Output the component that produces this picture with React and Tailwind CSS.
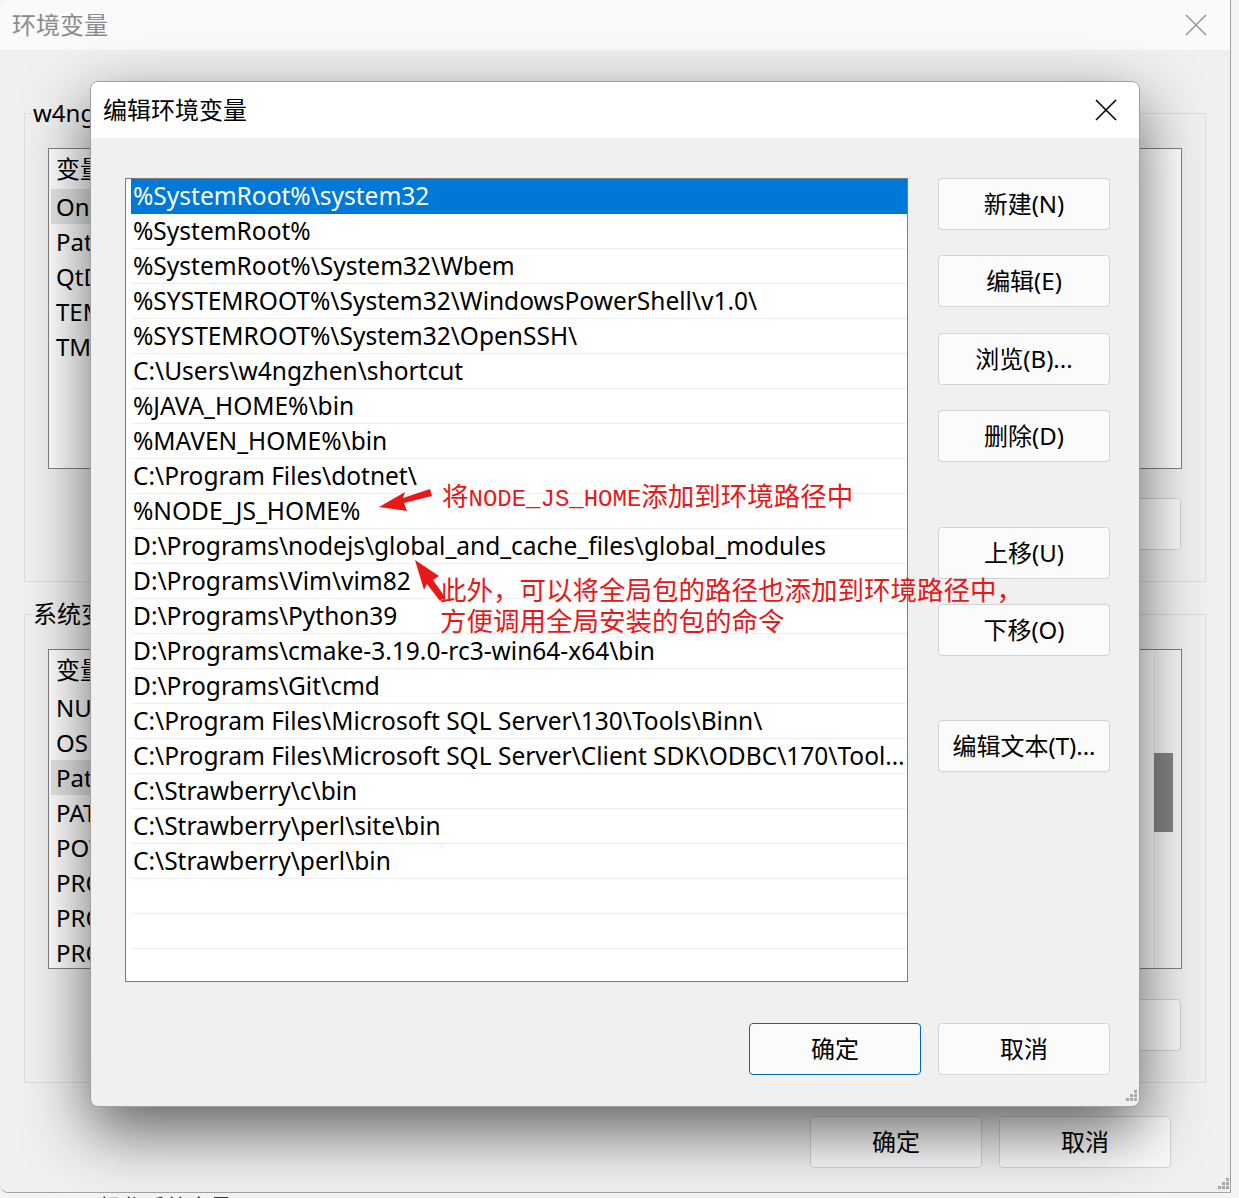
import React from "react";

const paths = [
  "%SystemRoot%\\system32",
  "%SystemRoot%",
  "%SystemRoot%\\System32\\Wbem",
  "%SYSTEMROOT%\\System32\\WindowsPowerShell\\v1.0\\",
  "%SYSTEMROOT%\\System32\\OpenSSH\\",
  "C:\\Users\\w4ngzhen\\shortcut",
  "%JAVA_HOME%\\bin",
  "%MAVEN_HOME%\\bin",
  "C:\\Program Files\\dotnet\\",
  "%NODE_JS_HOME%",
  "D:\\Programs\\nodejs\\global_and_cache_files\\global_modules",
  "D:\\Programs\\Vim\\vim82",
  "D:\\Programs\\Python39",
  "D:\\Programs\\cmake-3.19.0-rc3-win64-x64\\bin",
  "D:\\Programs\\Git\\cmd",
  "C:\\Program Files\\Microsoft SQL Server\\130\\Tools\\Binn\\",
  "C:\\Program Files\\Microsoft SQL Server\\Client SDK\\ODBC\\170\\Tools\\Binn\\",
  "C:\\Strawberry\\c\\bin",
  "C:\\Strawberry\\perl\\site\\bin",
  "C:\\Strawberry\\perl\\bin",
  "",
  "",
  "",
];

const userVars = [
  ["OneDrive", "C:\\Users\\w4ngzhen\\OneDrive"],
  ["Path", "C:\\Users\\w4ngzhen\\AppData\\Local\\Microsoft\\WindowsApps"],
  ["QtDir", "D:\\Qt"],
  ["TEMP", "%USERPROFILE%\\AppData\\Local\\Temp"],
  ["TMP", "%USERPROFILE%\\AppData\\Local\\Temp"],
];

const sysVars = [
  ["NUMBER_OF_PROCESSORS", "8"],
  ["OS", "Windows_NT"],
  ["Path", "%SystemRoot%\\system32;%SystemRoot%"],
  ["PATHEXT", ".COM;.EXE;.BAT;.CMD"],
  ["POWERSHELL_DISTRIBUTION_CHANNEL", "MSI:Windows 10 Pro"],
  ["PROCESSOR_ARCHITECTURE", "AMD64"],
  ["PROCESSOR_IDENTIFIER", "Intel64 Family 6"],
  ["PROCESSOR_LEVEL", "6"],
];

function Btn({ children, primary, className = "" }) {
  return (
    <button
      className={
        "w-[172px] h-[52px] rounded-[4px] bg-[#fbfbfb] text-[24px] text-black flex items-center justify-center " +
        (primary ? "border border-[#0067c0] " : "border border-[#d3d3d3] ") +
        className
      }
    >
      {children}
    </button>
  );
}

function CloseIcon({ color = "#000" }) {
  return (
    <svg width="22" height="22" viewBox="0 0 22 22">
      <path d="M1 1L21 21M21 1L1 21" stroke={color} strokeWidth="1.6" fill="none" />
    </svg>
  );
}

function Grip() {
  return (
    <svg width="14" height="14" viewBox="0 0 14 14">
      {[
        [11, 1],
        [7, 5],
        [11, 5],
        [3, 9],
        [7, 9],
        [11, 9],
      ].map(([x, y], i) => (
        <rect key={i} x={x} y={y} width="3" height="3" fill="#a8a8a8" />
      ))}
    </svg>
  );
}

function VarList({ vars, active, scroll }) {
  return (
    <div className="flex h-full border border-[#828282] bg-white">
      <div className="flex-1 overflow-hidden">
        <div className="h-[40px] flex items-center px-[7px]">
          <span className="w-[340px]">变量</span>
          <span>值</span>
        </div>
        {vars.map(([k, v], i) => (
          <div key={k + i} className="h-[35px] flex items-center pl-[2px] whitespace-nowrap">
            <span
              className={
                "w-[340px] h-full flex items-center pl-[5px] truncate " +
                (i === active ? "bg-[#e5e5e5]" : "")
              }
            >
              {k}
            </span>
            <span className="pl-[5px]">{v}</span>
          </div>
        ))}
      </div>
      {scroll && (
        <div className="w-[28px] pt-[103px] bg-[#f7f7f7]">
          <div className="ml-[1px] w-[19px] h-[79px] bg-[#858585]" />
        </div>
      )}
    </div>
  );
}

function BackWindow() {
  return (
    <div className="w-[1231px] h-[1193px] shrink-0 flex flex-col bg-[#f0f0f0] border-r border-b border-[#a4a4a4] rounded-tl-[8px] rounded-bl-[8px] overflow-hidden">
      <div className="h-[50px] shrink-0 flex items-center justify-between pl-[12px] pr-[23px] bg-[#fafafa]">
        <span className="text-[24px] text-[#8c8c8c]">环境变量</span>
        <CloseIcon color="#9a9a9a" />
      </div>
      <div className="flex flex-col px-[24px]">
        <fieldset className="mt-[47px] border border-[#dcdcdc] px-[23px] pb-[31px]">
          <legend className="-ml-[16px] px-[1px] text-[24px] leading-[32px]">
            w4ngzhen 的用户变量(U)
          </legend>
          <div className="mt-[19px] h-[321px]">
            <VarList vars={userVars} active={0} />
          </div>
          <div className="mt-[29px] flex justify-end gap-[17px] pr-[1px]">
            <Btn>新建(N)...</Btn>
            <Btn>编辑(E)...</Btn>
            <Btn>删除(D)</Btn>
          </div>
        </fieldset>
        <fieldset className="mt-[16px] border border-[#dcdcdc] px-[23px] pb-[31px]">
          <legend className="-ml-[16px] px-[1px] text-[24px] leading-[32px]">系统变量(S)</legend>
          <div className="mt-[19px] h-[320px]">
            <VarList vars={sysVars} active={2} scroll />
          </div>
          <div className="mt-[30px] flex justify-end gap-[17px] pr-[1px]">
            <Btn>新建(W)...</Btn>
            <Btn>编辑(I)...</Btn>
            <Btn>删除(L)</Btn>
          </div>
        </fieldset>
        <div className="mt-[33px] flex justify-end gap-[17px] pr-[35px]">
          <Btn>确定</Btn>
          <Btn>取消</Btn>
        </div>
      </div>
      <div className="flex-1 flex items-end justify-end pr-[1px] pb-[1px]">
        <Grip />
      </div>
    </div>
  );
}

function EditDialog() {
  return (
    <div className="absolute left-[90px] top-[81px] w-[1050px] h-[1026px] flex flex-col rounded-[8px] border border-[#a0a0a0] bg-[#f0f0f0] shadow-[0_24px_64px_rgba(0,0,0,0.6)] overflow-hidden">
      <div className="h-[56px] shrink-0 flex items-center justify-between pl-[12px] pr-[22px] bg-white">
        <span className="text-[24px] text-black">编辑环境变量</span>
        <CloseIcon />
      </div>
      <div className="flex-1 flex flex-col pl-[34px] pt-[40px]">
        <div className="flex gap-[30px]">
          <div className="w-[783px] h-[804px] border border-[#7a7a7a] bg-white pl-[5px] overflow-hidden">
            {paths.map((p, i) => (
              <div
                key={i}
                className={
                  "h-[35px] flex items-center px-[2px] border-b text-[24.5px] " +
                  (i === 0
                    ? "bg-[#0078d7] text-white border-[#0078d7]"
                    : "border-[#eeeeee] text-black")
                }
              >
                <span className="truncate whitespace-nowrap">{p}</span>
              </div>
            ))}
          </div>
          <div className="w-[172px] flex flex-col">
            <Btn>新建(N)</Btn>
            <Btn className="mt-[25px]">编辑(E)</Btn>
            <Btn className="mt-[26px]">浏览(B)...</Btn>
            <Btn className="mt-[25px]">删除(D)</Btn>
            <Btn className="mt-[65px]">上移(U)</Btn>
            <Btn className="mt-[25px]">下移(O)</Btn>
            <Btn className="mt-[64px]">编辑文本(T)...</Btn>
          </div>
        </div>
        <div className="mt-[41px] flex justify-end gap-[17px] pr-[29px]">
          <Btn primary>确定</Btn>
          <Btn>取消</Btn>
        </div>
        <div className="flex-1 flex items-end justify-end pr-[2px] pb-[3px]">
          <Grip />
        </div>
      </div>
    </div>
  );
}

function Notes() {
  return (
    <>
      <svg
        className="absolute left-0 top-0 pointer-events-none"
        width="1239"
        height="1198"
        viewBox="0 0 1239 1198"
      >
        <path
          d="M379 507 L405 492 L403 498 L430 489 L432 496 L404 503 L407 511 Z"
          fill="#e81818"
        />
        <path
          d="M415 560 L439 576 L433 580 L445 597 L440 601 L427 584 L424 590 Z"
          fill="#e81818"
        />
      </svg>
      <div className="absolute left-[442px] top-[481px] leading-[31px] text-[26.5px] text-[#e81818] whitespace-nowrap">
        将<span className="font-['Liberation_Mono',monospace] text-[24px]">NODE_JS_HOME</span>
        添加到环境路径中
      </div>
      <div className="absolute left-[440px] top-[575px] leading-[31px] text-[26.5px] text-[#e81818] whitespace-nowrap">
        <div>此外，可以将全局包的路径也添加到环境路径中，</div>
        <div>方便调用全局安装的包的命令</div>
      </div>
    </>
  );
}

export default function App() {
  return (
    <div className="relative w-[1239px] h-[1198px] flex flex-col overflow-hidden bg-[#f4f4f4] text-[24px] text-black font-['Noto_Sans','Noto_Sans_CJK_SC',sans-serif]">
      <BackWindow />
      <div className="pl-[100px] pt-[1px] text-[22px] leading-[24px] text-[#333] whitespace-nowrap">
        操作系统变量
      </div>
      <EditDialog />
      <Notes />
    </div>
  );
}
